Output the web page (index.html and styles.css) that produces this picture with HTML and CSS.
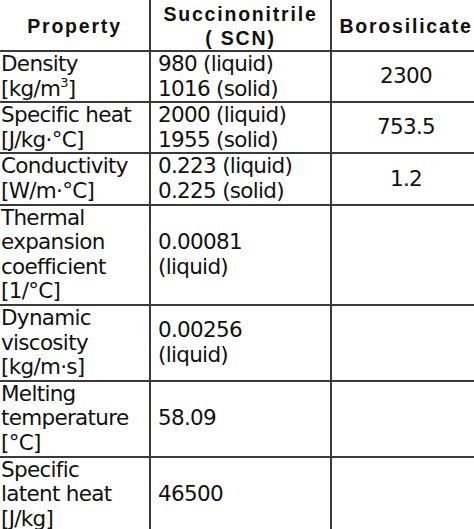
FILE: index.html
```html
<!DOCTYPE html>
<html>
<head>
<meta charset="utf-8">
<link rel="stylesheet" href="styles.css">
</head>
<body>
<table class="props">
  <colgroup>
    <col class="c1"><col class="c2"><col class="c3">
  </colgroup>
  <thead>
    <tr>
      <th class="h">Property</th>
      <th class="h">Succinonitrile<br>( SCN)</th>
      <th class="h">Borosilicate</th>
    </tr>
  </thead>
  <tbody>
    <tr>
      <td class="name">Density<br>[kg/m<sup>3</sup>]</td>
      <td class="val">980 (liquid)<br>1016 (solid)</td>
      <td class="ctr">2300</td>
    </tr>
    <tr>
      <td class="name">Specific heat<br>[J/kg·°C]</td>
      <td class="val">2000 (liquid)<br>1955 (solid)</td>
      <td class="ctr">753.5</td>
    </tr>
    <tr>
      <td class="name">Conductivity<br>[W/m·°C]</td>
      <td class="val">0.223 (liquid)<br>0.225 (solid)</td>
      <td class="ctr">1.2</td>
    </tr>
    <tr>
      <td class="name">Thermal<br>expansion<br>coefficient<br>[1/°C]</td>
      <td class="val">0.00081<br>(liquid)</td>
      <td class="ctr"></td>
    </tr>
    <tr>
      <td class="name">Dynamic<br>viscosity<br>[kg/m·s]</td>
      <td class="val">0.00256<br>(liquid)</td>
      <td class="ctr"></td>
    </tr>
    <tr>
      <td class="name">Melting<br>temperature<br>[°C]</td>
      <td class="val">58.09</td>
      <td class="ctr"></td>
    </tr>
    <tr>
      <td class="name">Specific<br>latent heat<br>[J/kg]</td>
      <td class="val">46500</td>
      <td class="ctr"></td>
    </tr>
  </tbody>
</table>
</body>
</html>
```
FILE: styles.css
```css
html, body {
  margin: 0;
  padding: 0;
  background: #ffffff;
  overflow: hidden;
}
body {
  width: 474px;
  height: 529px;
}
.props {
  border-collapse: collapse;
  table-layout: fixed;
  width: 480px;
  color: #111111;
  font-family: "DejaVu Sans", Verdana, sans-serif;
  font-size: 21.5px;
  letter-spacing: -0.7px;
  line-height: 24.6px;
}
.c1 { width: 150px; }
.c2 { width: 181px; }
.c3 { width: 149px; }
.props th, .props td {
  border: 2px solid #3a3a3a;
  padding: 0;
  vertical-align: middle;
}
.props tr > :first-child { border-left: none; }
.props tr > :last-child { border-right: none; }
.props thead th { border-top: none; }
.props tbody tr:last-child td { border-bottom: none; }
.props th.h {
  font-family: "Liberation Sans", Arial, sans-serif;
  font-weight: bold;
  font-size: 19.5px;
  letter-spacing: 1.8px;
  line-height: 24px;
  text-align: center;
  height: 49px;
  padding-top: 1px;
  color: #111111;
}
.props td.name {
  text-align: left;
  padding-left: 1px;
}
.props td.val {
  text-align: left;
  padding-left: 7px;
}
.props td.ctr {
  text-align: center;
}
sup {
  font-size: 13px;
  line-height: 0;
  vertical-align: 9px;
}
```
